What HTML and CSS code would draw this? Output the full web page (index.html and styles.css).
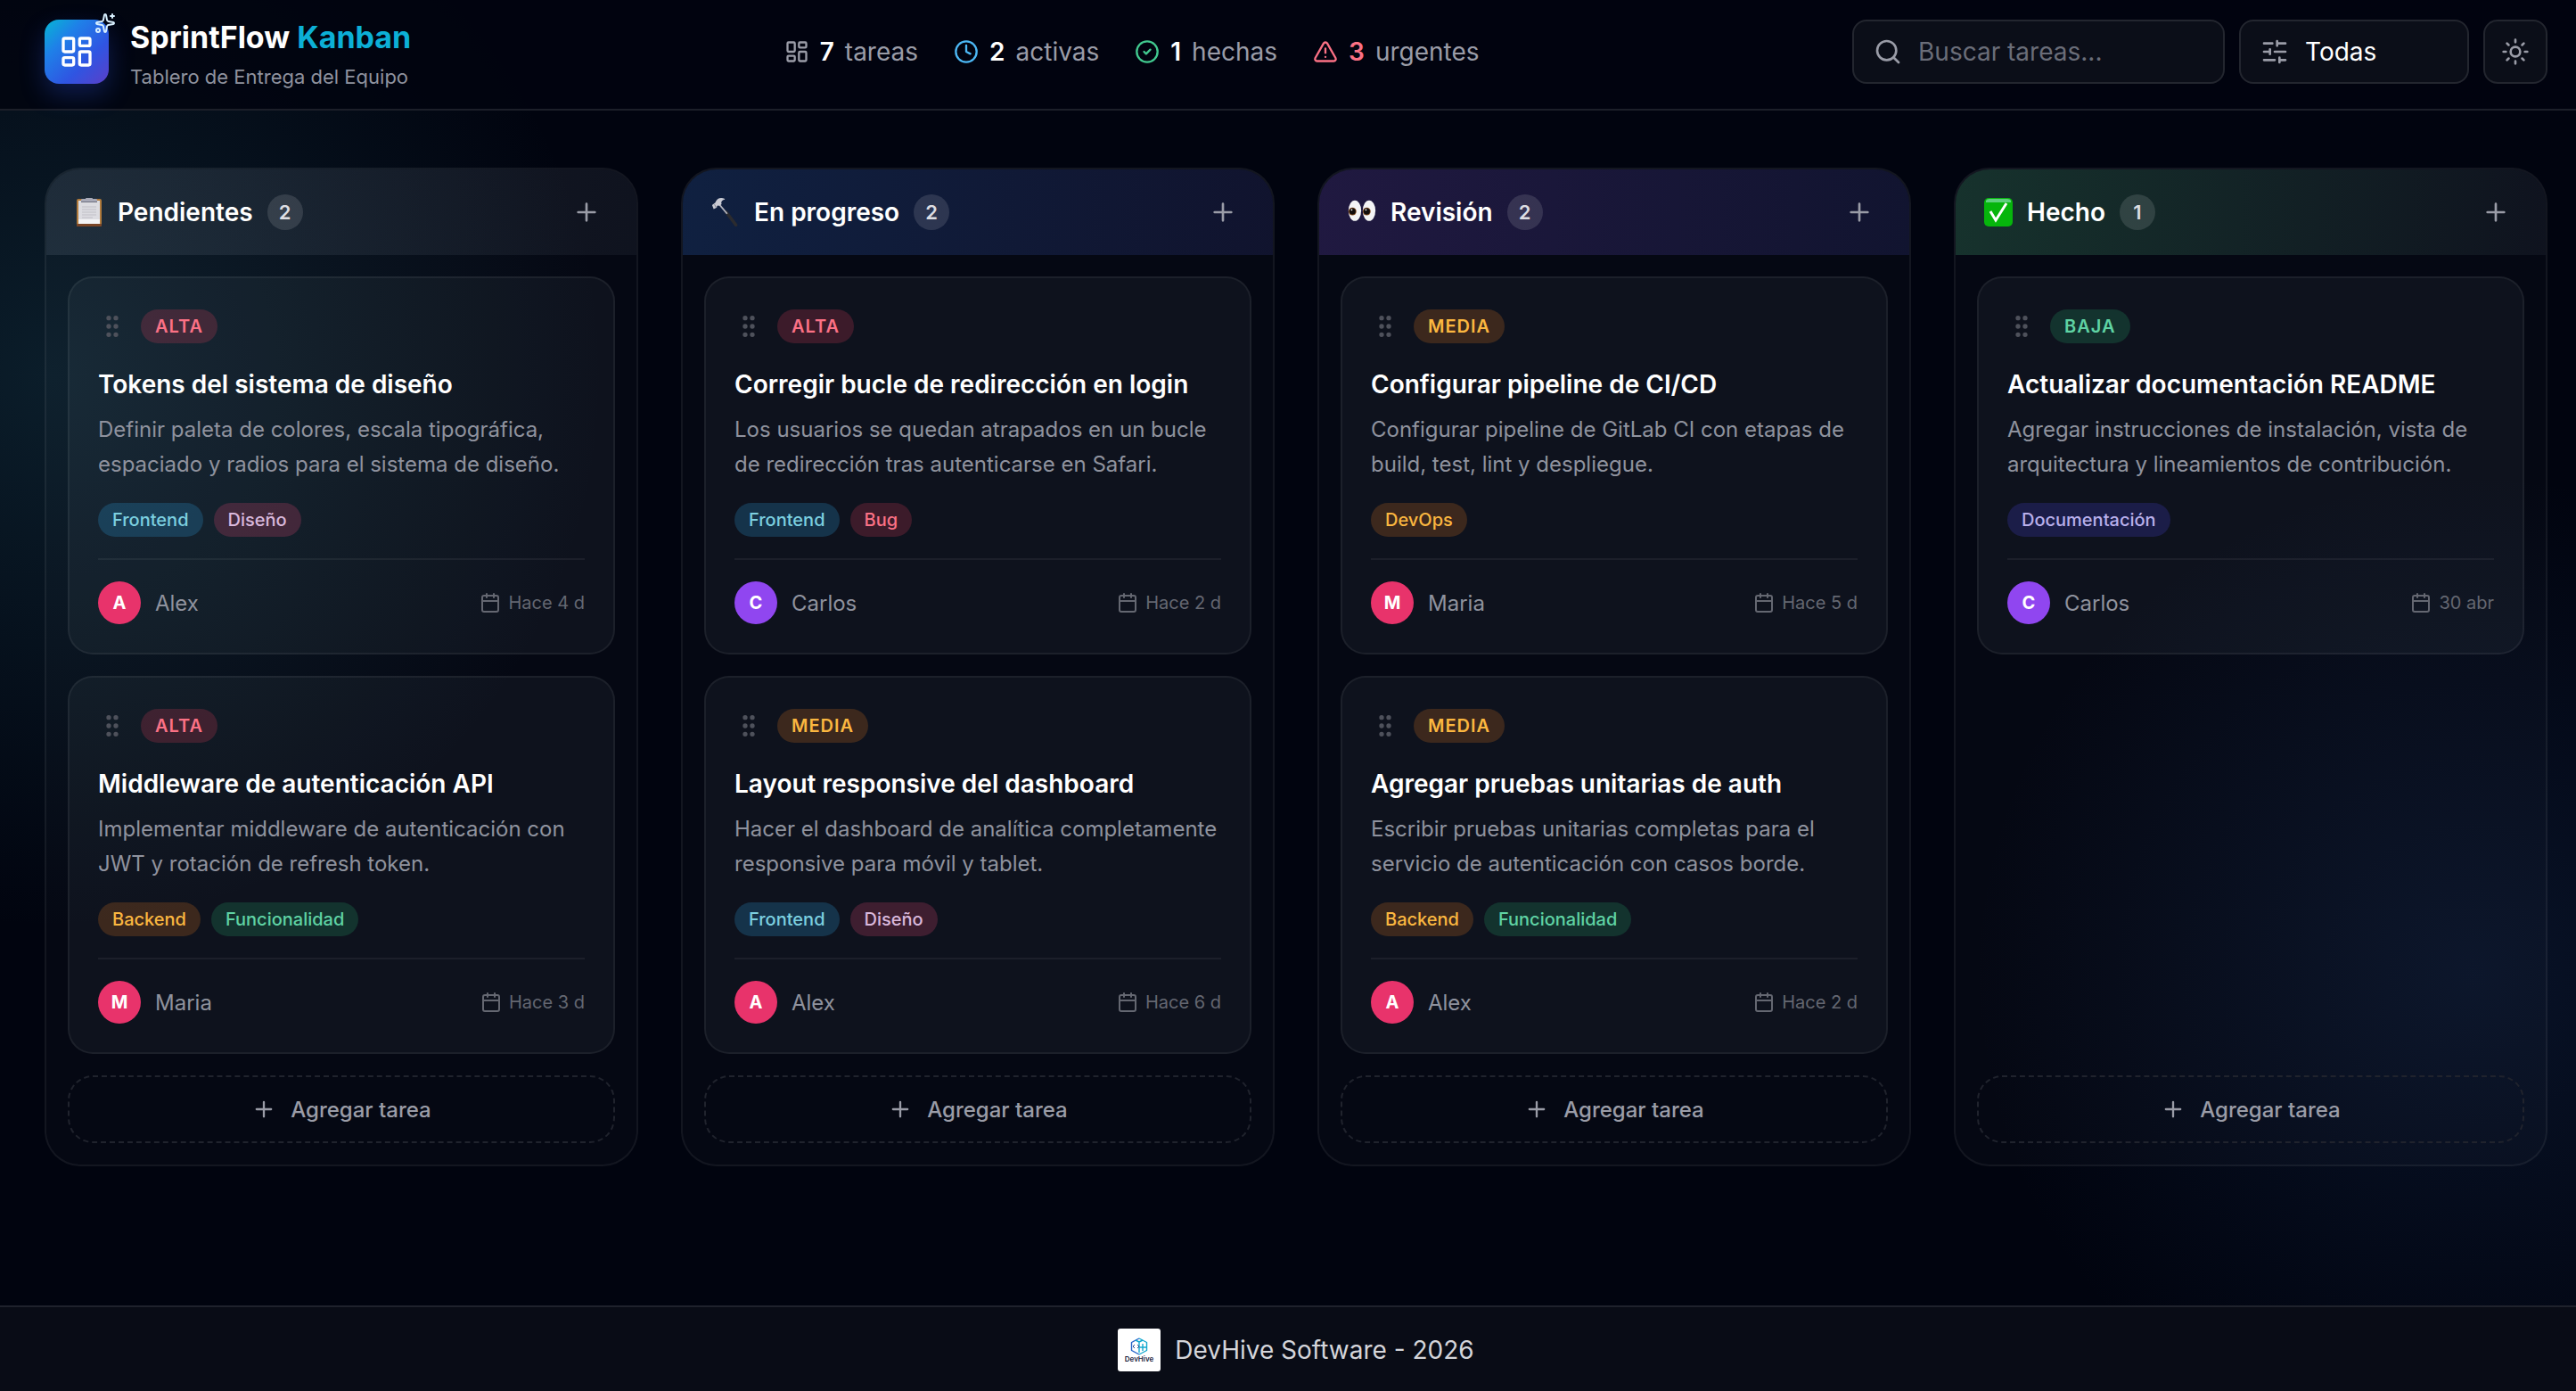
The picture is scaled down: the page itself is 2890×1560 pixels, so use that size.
FILE: index.html
```html
<!DOCTYPE html>
<html lang="es">

<head>
    <meta charset="UTF-8">
    <meta name="viewport" content="width=device-width, initial-scale=1.0">
    <title>SprintFlow Kanban</title>
    <link rel="stylesheet" href="styles.css">
</head>

<body>
    <!-- Iconos compartidos -->
    <svg class="sprite" aria-hidden="true">
        <symbol id="i-board" viewBox="0 0 24 24">
            <rect width="7" height="9" x="3" y="3" rx="1"></rect>
            <rect width="7" height="5" x="14" y="3" rx="1"></rect>
            <rect width="7" height="9" x="14" y="12" rx="1"></rect>
            <rect width="7" height="5" x="3" y="16" rx="1"></rect>
        </symbol>
        <symbol id="i-sparkles" viewBox="0 0 24 24">
            <path d="M11.017 2.814a1 1 0 0 1 1.966 0l1.051 5.558a2 2 0 0 0 1.594 1.594l5.558 1.051a1 1 0 0 1 0 1.966l-5.558 1.051a2 2 0 0 0-1.594 1.594l-1.051 5.558a1 1 0 0 1-1.966 0l-1.051-5.558a2 2 0 0 0-1.594-1.594l-5.558-1.051a1 1 0 0 1 0-1.966l5.558-1.051a2 2 0 0 0 1.594-1.594z"></path>
            <path d="M20 2v4"></path>
            <path d="M22 4h-4"></path>
            <circle cx="4" cy="20" r="2"></circle>
        </symbol>
        <symbol id="i-clock" viewBox="0 0 24 24">
            <circle cx="12" cy="12" r="10"></circle>
            <path d="M12 6v6l4 2"></path>
        </symbol>
        <symbol id="i-check" viewBox="0 0 24 24">
            <circle cx="12" cy="12" r="10"></circle>
            <path d="m9 12 2 2 4-4"></path>
        </symbol>
        <symbol id="i-alert" viewBox="0 0 24 24">
            <path d="m21.73 18-8-14a2 2 0 0 0-3.48 0l-8 14A2 2 0 0 0 4 21h16a2 2 0 0 0 1.73-3"></path>
            <path d="M12 9v4"></path>
            <path d="M12 17h.01"></path>
        </symbol>
        <symbol id="i-search" viewBox="0 0 24 24">
            <path d="m21 21-4.34-4.34"></path>
            <circle cx="11" cy="11" r="8"></circle>
        </symbol>
        <symbol id="i-sliders" viewBox="0 0 24 24">
            <path d="M10 5H3M12 19H3M14 3v4M16 17v4M21 12h-9M21 19h-5M21 5h-7M8 10v4M8 12H3"></path>
        </symbol>
        <symbol id="i-sun" viewBox="0 0 24 24">
            <circle cx="12" cy="12" r="4"></circle>
            <path d="M12 2v2M12 20v2M4.93 4.93l1.41 1.41M17.66 17.66l1.41 1.41M2 12h2M20 12h2M6.34 17.66l-1.41 1.41M19.07 4.93l-1.41 1.41"></path>
        </symbol>
        <symbol id="i-plus" viewBox="0 0 24 24">
            <path d="M5 12h14M12 5v14"></path>
        </symbol>
        <symbol id="i-grip" viewBox="0 0 24 24">
            <circle cx="9" cy="12" r="1"></circle>
            <circle cx="9" cy="5" r="1"></circle>
            <circle cx="9" cy="19" r="1"></circle>
            <circle cx="15" cy="12" r="1"></circle>
            <circle cx="15" cy="5" r="1"></circle>
            <circle cx="15" cy="19" r="1"></circle>
        </symbol>
        <symbol id="i-calendar" viewBox="0 0 24 24">
            <path d="M8 2v4M16 2v4"></path>
            <rect width="18" height="18" x="3" y="4" rx="2"></rect>
            <path d="M3 10h18"></path>
        </symbol>
    </svg>

    <div class="app">
        <header class="topbar">
            <div class="brand">
                <div class="brand-logo">
                    <svg class="icon icon-lg"><use href="#i-board"></use></svg>
                    <svg class="icon brand-sparkles"><use href="#i-sparkles"></use></svg>
                </div>
                <div>
                    <h1 class="brand-name">SprintFlow <span>Kanban</span></h1>
                    <p class="brand-sub">Tablero de Entrega del Equipo</p>
                </div>
            </div>

            <ul class="stats">
                <li class="stat"><svg class="icon"><use href="#i-board"></use></svg><strong>7</strong><span>tareas</span></li>
                <li class="stat stat-active"><svg class="icon"><use href="#i-clock"></use></svg><strong>2</strong><span>activas</span></li>
                <li class="stat stat-done"><svg class="icon"><use href="#i-check"></use></svg><strong>1</strong><span>hechas</span></li>
                <li class="stat stat-urgent"><svg class="icon"><use href="#i-alert"></use></svg><strong>3</strong><span>urgentes</span></li>
            </ul>

            <div class="tools">
                <label class="field field-search">
                    <svg class="icon icon-md"><use href="#i-search"></use></svg>
                    <input type="search" placeholder="Buscar tareas..." aria-label="Buscar tareas">
                </label>
                <label class="field field-filter">
                    <svg class="icon icon-md"><use href="#i-sliders"></use></svg>
                    <select aria-label="Filtrar por prioridad">
                        <option>Todas</option>
                        <option>Alta</option>
                        <option>Media</option>
                        <option>Baja</option>
                    </select>
                </label>
                <button class="theme-button" type="button" aria-label="Cambiar tema">
                    <svg class="icon icon-md"><use href="#i-sun"></use></svg>
                </button>
            </div>
        </header>

        <main class="board">
            <!-- Pendientes -->
            <section class="column">
                <header class="column-head head-todo">
                    <svg class="emoji" viewBox="2 3 32 32" aria-hidden="true">
                        <rect x="4" y="4" width="28" height="31" rx="2" fill="#b07a3c"></rect>
                        <rect x="4" y="32" width="28" height="3" rx="1" fill="#7a4526"></rect>
                        <rect x="6" y="6" width="24" height="26" fill="#dcdce1"></rect>
                        <rect x="6" y="27" width="24" height="5" fill="#f4f4f6"></rect>
                        <path d="M10 13h16M10 16h16M10 19h16M10 22h16M10 25h12" stroke="#c0bfc6" stroke-width="1"></path>
                        <path d="M9 8V5q0-1 2-1h3q1-3 4-3t4 3h3q2 0 2 1v3z" fill="#a9aab8"></path>
                        <path d="M9 7h18v1H9z" fill="#6d6f80"></path>
                    </svg>
                    <h2>Pendientes</h2>
                    <span class="count">2</span>
                    <button class="add-icon" type="button" aria-label="Agregar a Pendientes"><svg class="icon icon-md"><use href="#i-plus"></use></svg></button>
                </header>
                <div class="column-body">
                    <article class="card">
                        <div class="card-top">
                            <button class="grip" type="button" aria-label="Mover"><svg class="icon icon-md"><use href="#i-grip"></use></svg></button>
                            <span class="pill priority rose">ALTA</span>
                        </div>
                        <h3>Tokens del sistema de diseño</h3>
                        <p>Definir paleta de colores, escala tipográfica, espaciado y radios para el sistema de diseño.</p>
                        <div class="tags"><span class="pill sky">Frontend</span><span class="pill pink">Diseño</span></div>
                        <footer class="card-foot">
                            <span class="avatar">A</span><span class="person">Alex</span>
                            <span class="date"><svg class="icon icon-sm"><use href="#i-calendar"></use></svg>Hace 4 d</span>
                        </footer>
                    </article>
                    <article class="card">
                        <div class="card-top">
                            <button class="grip" type="button" aria-label="Mover"><svg class="icon icon-md"><use href="#i-grip"></use></svg></button>
                            <span class="pill priority rose">ALTA</span>
                        </div>
                        <h3>Middleware de autenticación API</h3>
                        <p>Implementar middleware de autenticación con JWT y rotación de refresh token.</p>
                        <div class="tags"><span class="pill amber">Backend</span><span class="pill green">Funcionalidad</span></div>
                        <footer class="card-foot">
                            <span class="avatar">M</span><span class="person">Maria</span>
                            <span class="date"><svg class="icon icon-sm"><use href="#i-calendar"></use></svg>Hace 3 d</span>
                        </footer>
                    </article>
                    <button class="add-task" type="button"><svg class="icon"><use href="#i-plus"></use></svg>Agregar tarea</button>
                </div>
            </section>

            <!-- En progreso -->
            <section class="column">
                <header class="column-head head-progress">
                    <svg class="emoji" viewBox="0 0 36 36" aria-hidden="true">
                        <path d="M19 18 31 34" stroke="#2b2b2f" stroke-width="4" stroke-linecap="round"></path>
                        <path d="M10 8 20 20" stroke="#b4b5bf" stroke-width="2"></path>
                        <path d="M17 1C12-1 7 0 5 6L1 9l2 5 4-2c0-2 1-3 3-2l3-2c-1-3 0-5 4-6z" fill="#c9cad3"></path>
                        <path d="M4 8 6 12" stroke="#7d7e8a" stroke-width="1"></path>
                    </svg>
                    <h2>En progreso</h2>
                    <span class="count">2</span>
                    <button class="add-icon" type="button" aria-label="Agregar a En progreso"><svg class="icon icon-md"><use href="#i-plus"></use></svg></button>
                </header>
                <div class="column-body">
                    <article class="card">
                        <div class="card-top">
                            <button class="grip" type="button" aria-label="Mover"><svg class="icon icon-md"><use href="#i-grip"></use></svg></button>
                            <span class="pill priority rose">ALTA</span>
                        </div>
                        <h3>Corregir bucle de redirección en login</h3>
                        <p>Los usuarios se quedan atrapados en un bucle de redirección tras autenticarse en Safari.</p>
                        <div class="tags"><span class="pill sky">Frontend</span><span class="pill rose">Bug</span></div>
                        <footer class="card-foot">
                            <span class="avatar violet">C</span><span class="person">Carlos</span>
                            <span class="date"><svg class="icon icon-sm"><use href="#i-calendar"></use></svg>Hace 2 d</span>
                        </footer>
                    </article>
                    <article class="card">
                        <div class="card-top">
                            <button class="grip" type="button" aria-label="Mover"><svg class="icon icon-md"><use href="#i-grip"></use></svg></button>
                            <span class="pill priority amber">MEDIA</span>
                        </div>
                        <h3>Layout responsive del dashboard</h3>
                        <p>Hacer el dashboard de analítica completamente responsive para móvil y tablet.</p>
                        <div class="tags"><span class="pill sky">Frontend</span><span class="pill pink">Diseño</span></div>
                        <footer class="card-foot">
                            <span class="avatar">A</span><span class="person">Alex</span>
                            <span class="date"><svg class="icon icon-sm"><use href="#i-calendar"></use></svg>Hace 6 d</span>
                        </footer>
                    </article>
                    <button class="add-task" type="button"><svg class="icon"><use href="#i-plus"></use></svg>Agregar tarea</button>
                </div>
            </section>

            <!-- Revisión -->
            <section class="column">
                <header class="column-head head-review">
                    <svg class="emoji" viewBox="0 0 36 36" aria-hidden="true">
                        <ellipse cx="9" cy="16" rx="8" ry="13" fill="#f4f4f6"></ellipse>
                        <ellipse cx="27" cy="16" rx="8" ry="13" fill="#f4f4f6"></ellipse>
                        <circle cx="6" cy="17" r="5" fill="#8a5327"></circle>
                        <circle cx="24" cy="17" r="5" fill="#8a5327"></circle>
                        <circle cx="6" cy="17" r="4" fill="#120d0c"></circle>
                        <circle cx="24" cy="17" r="4" fill="#120d0c"></circle>
                        <circle cx="5" cy="15" r="1" fill="#fff"></circle>
                        <circle cx="23" cy="15" r="1" fill="#fff"></circle>
                    </svg>
                    <h2>Revisión</h2>
                    <span class="count">2</span>
                    <button class="add-icon" type="button" aria-label="Agregar a Revisión"><svg class="icon icon-md"><use href="#i-plus"></use></svg></button>
                </header>
                <div class="column-body">
                    <article class="card">
                        <div class="card-top">
                            <button class="grip" type="button" aria-label="Mover"><svg class="icon icon-md"><use href="#i-grip"></use></svg></button>
                            <span class="pill priority amber">MEDIA</span>
                        </div>
                        <h3>Configurar pipeline de CI/CD</h3>
                        <p>Configurar pipeline de GitLab CI con etapas de build, test, lint y despliegue.</p>
                        <div class="tags"><span class="pill amber">DevOps</span></div>
                        <footer class="card-foot">
                            <span class="avatar">M</span><span class="person">Maria</span>
                            <span class="date"><svg class="icon icon-sm"><use href="#i-calendar"></use></svg>Hace 5 d</span>
                        </footer>
                    </article>
                    <article class="card">
                        <div class="card-top">
                            <button class="grip" type="button" aria-label="Mover"><svg class="icon icon-md"><use href="#i-grip"></use></svg></button>
                            <span class="pill priority amber">MEDIA</span>
                        </div>
                        <h3>Agregar pruebas unitarias de auth</h3>
                        <p>Escribir pruebas unitarias completas para el servicio de autenticación con casos borde.</p>
                        <div class="tags"><span class="pill amber">Backend</span><span class="pill green">Funcionalidad</span></div>
                        <footer class="card-foot">
                            <span class="avatar">A</span><span class="person">Alex</span>
                            <span class="date"><svg class="icon icon-sm"><use href="#i-calendar"></use></svg>Hace 2 d</span>
                        </footer>
                    </article>
                    <button class="add-task" type="button"><svg class="icon"><use href="#i-plus"></use></svg>Agregar tarea</button>
                </div>
            </section>

            <!-- Hecho -->
            <section class="column">
                <header class="column-head head-done">
                    <svg class="emoji" viewBox="2 2 32 32" aria-hidden="true">
                        <rect x="2" y="2" width="32" height="32" rx="5" fill="#06b50c"></rect>
                        <path d="M4 5q1-2 4-2h20q3 0 4 2v2H4z" fill="#5fd07e"></path>
                        <path d="M9 17l6 10L27 8" fill="none" stroke="#fff" stroke-width="3"></path>
                    </svg>
                    <h2>Hecho</h2>
                    <span class="count">1</span>
                    <button class="add-icon" type="button" aria-label="Agregar a Hecho"><svg class="icon icon-md"><use href="#i-plus"></use></svg></button>
                </header>
                <div class="column-body">
                    <article class="card">
                        <div class="card-top">
                            <button class="grip" type="button" aria-label="Mover"><svg class="icon icon-md"><use href="#i-grip"></use></svg></button>
                            <span class="pill priority green">BAJA</span>
                        </div>
                        <h3>Actualizar documentación README</h3>
                        <p>Agregar instrucciones de instalación, vista de arquitectura y lineamientos de contribución.</p>
                        <div class="tags"><span class="pill indigo">Documentación</span></div>
                        <footer class="card-foot">
                            <span class="avatar violet">C</span><span class="person">Carlos</span>
                            <span class="date"><svg class="icon icon-sm"><use href="#i-calendar"></use></svg>30 abr</span>
                        </footer>
                    </article>
                    <button class="add-task" type="button"><svg class="icon"><use href="#i-plus"></use></svg>Agregar tarea</button>
                </div>
            </section>
        </main>

        <footer class="site-foot">
            <svg class="foot-logo" viewBox="0 0 48 48" role="img" aria-label="DevHive">
                <rect width="48" height="48" rx="3" fill="#fff"></rect>
                <g fill="none" stroke-width="1.4" stroke-linejoin="round">
                    <path d="M24 11 15.500 15.500v9L24 29" stroke="#2563c9"></path>
                    <path d="M24 11l8.500 4.500v9L24 29M24 15v12M28 17v8M24 21h8M20 13l4 2 4-2" stroke="#14a9cf"></path>
                    <path d="m19 18-2 2 2 2M22 18l2 2-2 2" stroke="#2b4a8c" stroke-width="1"></path>
                </g>
                <text x="24" y="37" text-anchor="middle" class="foot-logo-text">DevHive</text>
            </svg>
            <span>DevHive Software - 2026</span>
        </footer>
    </div>
</body>

</html>
```

FILE: styles.css
```css
* {
    box-sizing: border-box;
    margin: 0;
    padding: 0;
}

body {
    font-family: Inter, "Liberation Sans", sans-serif;
    color: #fff;
    background: #01040f;
}

button,
input,
select {
    font: inherit;
    color: inherit;
    background: none;
    border: none;
}

button {
    cursor: pointer;
}

.sprite {
    display: none;
}

.app {
    min-height: 100vh;
    display: flex;
    flex-direction: column;
    background:
        radial-gradient(circle at 2% 27%, rgba(50, 130, 150, 0.2), transparent 620px),
        radial-gradient(circle at 96% 70%, rgba(45, 90, 160, 0.17), transparent 560px),
        #01040f;
}

/* Iconos */
.icon {
    width: 28px;
    height: 28px;
    flex: none;
    fill: none;
    stroke: currentColor;
    stroke-width: 2;
    stroke-linecap: round;
    stroke-linejoin: round;
}

.icon-sm {
    width: 24px;
    height: 24px;
}

.icon-md {
    width: 32px;
    height: 32px;
}

.icon-lg {
    width: 40px;
    height: 40px;
}

/* Barra superior */
.topbar {
    display: flex;
    justify-content: space-between;
    align-items: center;
    padding: 14px 32px 20px 50px;
    border-bottom: 2px solid #1c1f29;
    background: rgba(1, 4, 15, 0.8);
}

.brand {
    display: flex;
    align-items: center;
    gap: 24px;
}

.brand-logo {
    position: relative;
    width: 72px;
    height: 72px;
    display: flex;
    justify-content: center;
    align-items: center;
    border-radius: 16px;
    background: linear-gradient(135deg, #06b6d4, #1f80e8 30%, #2f55e2 65%, #5b3fc8);
    box-shadow: 0 12px 28px rgba(43, 80, 220, 0.3);
}

.brand-sparkles {
    position: absolute;
    top: -8px;
    right: -8px;
    width: 24px;
    height: 24px;
    color: #d8f0ff;
}

.brand-name {
    font-size: 34px;
    line-height: 56px;
    font-weight: 700;
}

.brand-name span {
    color: #0cb0d6;
}

.brand-sub {
    font-size: 22px;
    line-height: 32px;
    color: #8f929e;
}

.stats {
    display: flex;
    gap: 40px;
    list-style: none;
    font-size: 28px;
    line-height: 40px;
    color: #9a9ca7;
}

.stat {
    display: flex;
    align-items: center;
    gap: 12px;
}

.stat strong {
    font-weight: 600;
    color: #fff;
}

.stat-active .icon {
    color: #4cb8f5;
}

.stat-done .icon {
    color: #41c98f;
}

.stat-urgent .icon,
.stat-urgent strong {
    color: #fb7185;
}

.tools {
    display: flex;
    gap: 16px;
}

.field,
.theme-button {
    display: flex;
    align-items: center;
    height: 72px;
    border: 2px solid #23262f;
    border-radius: 16px;
    background: #0b0e18;
    color: #9a9ca7;
}

.field {
    gap: 18px;
    padding: 0 22px;
    font-size: 28px;
}

.field-search {
    width: 418px;
}

.field-filter {
    width: 258px;
}

.field input,
.field select {
    flex: 1;
    min-width: 0;
    color: #fff;
    outline: none;
    appearance: none;
}

.field input::placeholder {
    color: #6a6d78;
    opacity: 1;
}

.theme-button {
    width: 72px;
    justify-content: center;
}

/* Tablero */
.board {
    flex: 1;
    display: grid;
    grid-template-columns: repeat(4, minmax(0, 1fr));
    align-items: stretch;
    align-content: start;
    gap: 48px;
    padding: 64px 32px 64px 50px;
}

.column {
    display: flex;
    flex-direction: column;
    overflow: hidden;
    border: 2px solid rgba(255, 255, 255, 0.06);
    border-radius: 40px;
    background: rgba(255, 255, 255, 0.02);
}

.column-head {
    display: flex;
    align-items: center;
    gap: 16px;
    height: 96px;
    padding: 0 32px;
}

.head-todo {
    background: linear-gradient(90deg, rgba(148, 163, 184, 0.14), rgba(148, 163, 184, 0.07));
}

.head-progress {
    background: linear-gradient(90deg, rgba(59, 130, 246, 0.2), rgba(99, 102, 241, 0.12));
}

.head-review {
    background: linear-gradient(90deg, rgba(139, 92, 246, 0.2), rgba(99, 102, 241, 0.13));
}

.head-done {
    background: linear-gradient(90deg, rgba(80, 190, 130, 0.23), rgba(148, 163, 184, 0.07));
}

.emoji {
    width: 32px;
    height: 32px;
}

.column-head h2 {
    font-size: 28px;
    line-height: 40px;
    font-weight: 600;
}

.count {
    min-width: 40px;
    padding: 4px 12px;
    border-radius: 20px;
    background: rgba(255, 255, 255, 0.12);
    color: #dcdde2;
    font-size: 22px;
    line-height: 32px;
    font-weight: 600;
    text-align: center;
}

.add-icon {
    display: flex;
    margin-left: auto;
    padding: 8px;
    color: #9a9ca7;
}

.column-body {
    flex: 1;
    display: flex;
    flex-direction: column;
    gap: 24px;
    padding: 24px;
}

/* Tarjetas */
.card {
    padding: 32px;
    border: 2px solid rgba(255, 255, 255, 0.06);
    border-radius: 28px;
    background: rgba(240, 255, 255, 0.045);
}

.card-top {
    display: flex;
    align-items: center;
    gap: 16px;
    height: 44px;
    margin-bottom: 24px;
}

.grip {
    display: flex;
    color: #4e515b;
}

.pill {
    padding: 3px 16px;
    border-radius: 20px;
    font-size: 20px;
    line-height: 32px;
    font-weight: 500;
}

.priority {
    font-weight: 600;
    letter-spacing: 1px;
}

.rose {
    background: rgba(244, 63, 94, 0.2);
    color: #fb7185;
}

.amber {
    background: rgba(245, 130, 30, 0.2);
    color: #fbb740;
}

.green {
    background: rgba(40, 185, 115, 0.2);
    color: #5fd3a4;
}

.sky {
    background: rgba(45, 150, 210, 0.25);
    color: #7cd0e0;
}

.pink {
    background: rgba(236, 72, 120, 0.22);
    color: #d9b8dc;
}

.indigo {
    background: rgba(79, 70, 229, 0.22);
    color: #b9b0ec;
}

.card h3 {
    font-size: 28px;
    line-height: 38px;
    font-weight: 600;
    margin-bottom: 12px;
}

.card p {
    font-size: 24px;
    line-height: 39px;
    color: #8f929e;
}

.tags {
    display: flex;
    gap: 12px;
    margin: 24px 0;
}

.card-foot {
    display: flex;
    align-items: center;
    gap: 16px;
    padding-top: 24px;
    border-top: 2px solid rgba(255, 255, 255, 0.06);
}

.avatar {
    width: 48px;
    height: 48px;
    border-radius: 50%;
    background: #e8336b;
    font-size: 20px;
    line-height: 48px;
    font-weight: 700;
    text-align: center;
}

.avatar.violet {
    background: #9046f0;
}

.person {
    font-size: 24px;
    color: #8f929e;
}

.date {
    display: flex;
    align-items: center;
    gap: 8px;
    margin-left: auto;
    font-size: 20px;
    color: #646771;
}

.add-task {
    display: flex;
    justify-content: center;
    align-items: center;
    gap: 16px;
    height: 76px;
    margin-top: auto;
    border: 2px dashed #20232d;
    border-radius: 28px;
    color: #9a9ca7;
    font-size: 24px;
    font-weight: 500;
}

/* Pie de página */
.site-foot {
    display: flex;
    justify-content: center;
    align-items: center;
    gap: 16px;
    padding: 24px 32px 22px 50px;
    border-top: 2px solid #1f222c;
    background: #090c16;
    font-size: 28px;
    color: #d4d5da;
}

.foot-logo {
    width: 48px;
    height: 48px;
}

.foot-logo-text {
    font-size: 8px;
    font-weight: 600;
    fill: #1c2340;
}
```
